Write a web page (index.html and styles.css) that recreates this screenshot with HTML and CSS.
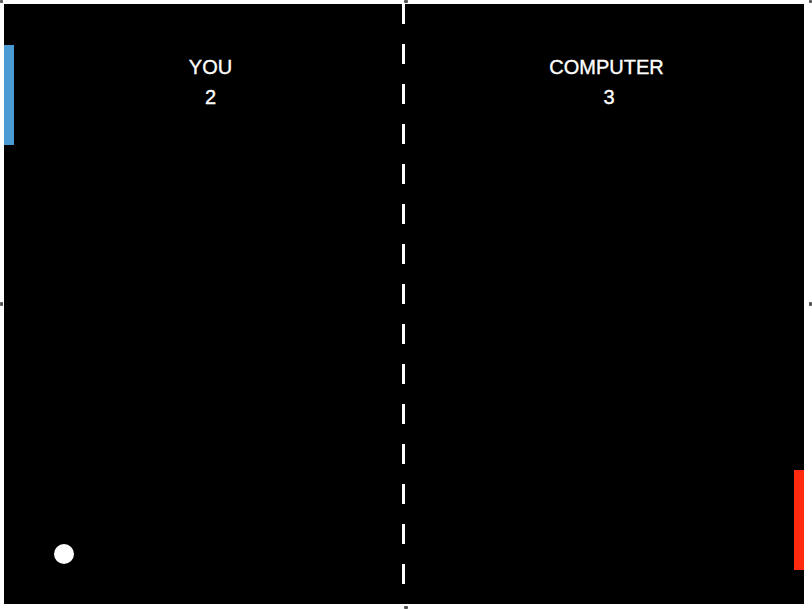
FILE: index.html
```html
<!DOCTYPE html>
<html>
<head>
<meta charset="utf-8">
<title>Pong</title>
<link rel="stylesheet" href="styles.css">
</head>
<body>
<div class="frame">
  <div class="stage">
    <div class="scores">
      <div class="score score-left">
        <div class="label">YOU</div>
        <div class="value">2</div>
      </div>
      <div class="score score-right">
        <div class="label">COMPUTER</div>
        <div class="value">3</div>
      </div>
    </div>
    <div class="net"></div>
    <div class="paddle paddle-player"></div>
    <div class="paddle paddle-computer"></div>
    <div class="ball"></div>
  </div>
  <span class="handle h-tl"></span>
  <span class="handle h-tm"></span>
  <span class="handle h-tr"></span>
  <span class="handle h-ml"></span>
  <span class="handle h-mr"></span>
  <span class="handle h-bm"></span>
</div>
</body>
</html>
```
FILE: styles.css
```css
html, body {
  margin: 0;
  padding: 0;
  background: #ffffff;
}

body {
  width: 812px;
  height: 609px;
  overflow: hidden;
}

.frame {
  position: relative;
  width: 812px;
  height: 609px;
  padding: 4px;
  box-sizing: border-box;
}

.stage {
  position: relative;
  width: 800px;
  height: 600px;
  background: #000000;
  overflow: hidden;
  font-family: "Liberation Sans", Arial, sans-serif;
  color: #ffffff;
}

.scores {
  display: flex;
  padding-top: 48px;
}

.score {
  width: 400px;
  box-sizing: border-box;
  text-align: center;
  font-size: 20px;
  line-height: 30px;
  -webkit-text-stroke: 0.35px #ffffff;
}

.score-left {
  padding-left: 13px;
}

.score-right {
  padding-left: 5px;
}

.score-right .value {
  padding-left: 5px;
}

.net {
  position: absolute;
  left: 398px;
  top: 0;
  width: 3px;
  height: 600px;
  background: repeating-linear-gradient(to bottom, #ffffff 0, #ffffff 20px, transparent 20px, transparent 40px);
}

.paddle {
  position: absolute;
  width: 10px;
  height: 100px;
}

.paddle-player {
  left: 0;
  top: 41px;
  background: #4a9bd4;
}

.paddle-computer {
  right: 0;
  top: 466px;
  background: #ff2a10;
}

.ball {
  position: absolute;
  left: 50px;
  top: 540px;
  width: 20px;
  height: 20px;
  border-radius: 50%;
  background: #ffffff;
}

.handle {
  position: absolute;
  width: 3px;
  height: 3px;
  background: #555555;
  border-radius: 1px;
}

.h-tl { left: 0; top: 0; }
.h-tm { left: 404px; top: 0; width: 4px; }
.h-tr { left: 809px; top: 0; }
.h-ml { left: 0; top: 302px; height: 4px; }
.h-mr { left: 809px; top: 302px; height: 4px; }
.h-bm { left: 404px; top: 606px; width: 4px; }
```
